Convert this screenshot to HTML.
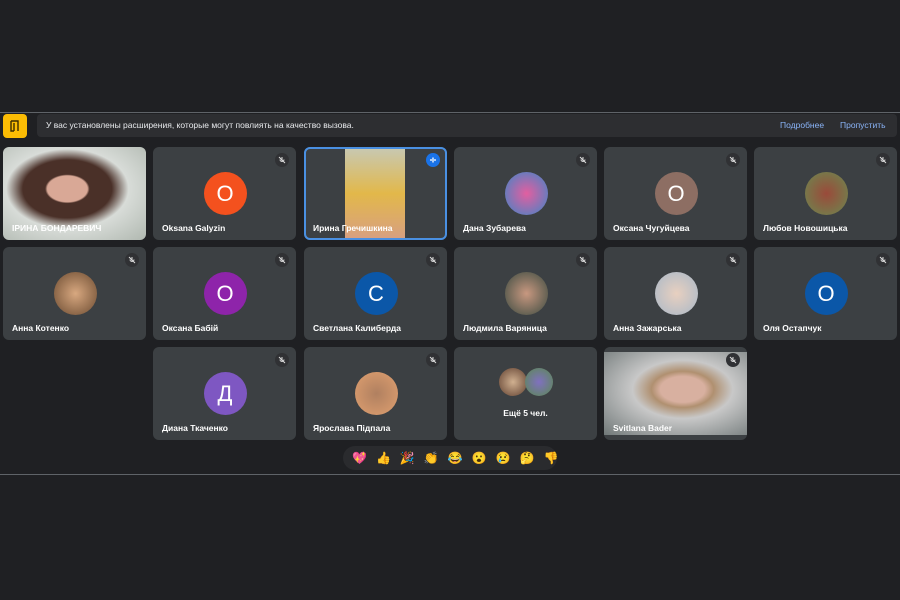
<!DOCTYPE html><html><head><meta charset="utf-8"><style>
body{margin:0;width:900px;height:600px;background:#1f2023;font-family:"Liberation Sans",sans-serif;position:relative;overflow:hidden}
.t{position:absolute;width:143px;height:93px;background:#3c4043;border-radius:6px;overflow:hidden}
.n{position:absolute;left:9px;bottom:7px;color:#fff;font-size:8.5px;font-weight:bold}
.av{position:absolute;left:50%;top:25px;width:43px;height:43px;margin-left:-21px;border-radius:50%;color:#fff;font-size:22px;text-align:center;line-height:43px}
.m{position:absolute;right:7px;top:6px;width:14px;height:14px;border-radius:50%;background:#303134}
.m svg{position:absolute;left:3px;top:3px}
</style></head><body>
<div style="position:absolute;left:0;top:112px;width:900px;height:1px;background:#5f6368"></div>
<div style="position:absolute;left:0;top:474px;width:900px;height:1px;background:#5f6368"></div>
<div style="position:absolute;left:3px;top:114px;width:24px;height:24px;background:#fbbc04;border-radius:4px"><svg width="24" height="24"><path d="M8 7h7v10M8 7v10h3M11 9v8M13 11h0" stroke="#3c2c00" stroke-width="1.4" fill="none"/></svg></div>
<div style="position:absolute;left:37px;top:114px;width:860px;height:23px;background:#2d2e31;border-radius:4px;color:#e8eaed;font-size:8.5px;line-height:23px">
<span style="margin-left:9px">У вас установлены расширения, которые могут повлиять на качество вызова.</span>
<span style="position:absolute;left:743px;color:#8ab4f8">Подробнее</span><span style="position:absolute;left:803px;color:#8ab4f8">Пропустить</span></div>

<div class="t" style="left:3px;top:147px;background:radial-gradient(ellipse at 45% 45%,#d9a896 0 18%,#4a3028 20% 40%,#d8dcd8 55%,#b0b8b0)"><div class="n">ІРИНА БОНДАРЕВИЧ</div></div>
<div class="t" style="left:153px;top:147px"><div class="m"><svg width="8" height="8"><path d="M4 1v4M2 3.5a2 2 0 0 0 4 0M1 1l6 6" stroke="#ddd" stroke-width="1" fill="none"/></svg></div><div class="av" style="background:#f4511e">O</div><div class="n">Oksana Galyzin</div></div>
<div class="t" style="left:304px;top:147px;outline:2px solid #4a90e2;outline-offset:-2px"><div style="position:absolute;left:41px;top:2px;width:60px;height:89px;background:linear-gradient(#c8c8b0,#e2b84a 50%,#d8a080)"></div><div class="m" style="background:#1a73e8"><svg width="8" height="8"><path d="M2 3v2M4 1.5v5M6 3v2" stroke="#fff" stroke-width="1.3"/></svg></div><div class="n">Ирина Гречишкина</div></div>
<div class="t" style="left:454px;top:147px"><div class="m"><svg width="8" height="8"><path d="M4 1v4M2 3.5a2 2 0 0 0 4 0M1 1l6 6" stroke="#ddd" stroke-width="1" fill="none"/></svg></div><div class="av" style="background:radial-gradient(#e25fa0,#3b86c8)"></div><div class="n">Дана Зубарева</div></div>
<div class="t" style="left:604px;top:147px"><div class="m"><svg width="8" height="8"><path d="M4 1v4M2 3.5a2 2 0 0 0 4 0M1 1l6 6" stroke="#ddd" stroke-width="1" fill="none"/></svg></div><div class="av" style="background:#8d6e63">O</div><div class="n">Оксана Чугуйцева</div></div>
<div class="t" style="left:754px;top:147px"><div class="m"><svg width="8" height="8"><path d="M4 1v4M2 3.5a2 2 0 0 0 4 0M1 1l6 6" stroke="#ddd" stroke-width="1" fill="none"/></svg></div><div class="av" style="background:radial-gradient(#9a4a3a,#6a8a50)"></div><div class="n">Любов Новошицька</div></div>

<div class="t" style="left:3px;top:247px"><div class="m"><svg width="8" height="8"><path d="M4 1v4M2 3.5a2 2 0 0 0 4 0M1 1l6 6" stroke="#ddd" stroke-width="1" fill="none"/></svg></div><div class="av" style="background:radial-gradient(#d8a880,#6a4a30)"></div><div class="n">Анна Котенко</div></div>
<div class="t" style="left:153px;top:247px"><div class="m"><svg width="8" height="8"><path d="M4 1v4M2 3.5a2 2 0 0 0 4 0M1 1l6 6" stroke="#ddd" stroke-width="1" fill="none"/></svg></div><div class="av" style="background:#8e24aa">O</div><div class="n">Оксана Бабій</div></div>
<div class="t" style="left:304px;top:247px"><div class="m"><svg width="8" height="8"><path d="M4 1v4M2 3.5a2 2 0 0 0 4 0M1 1l6 6" stroke="#ddd" stroke-width="1" fill="none"/></svg></div><div class="av" style="background:#0b57a8">C</div><div class="n">Светлана Калиберда</div></div>
<div class="t" style="left:454px;top:247px"><div class="m"><svg width="8" height="8"><path d="M4 1v4M2 3.5a2 2 0 0 0 4 0M1 1l6 6" stroke="#ddd" stroke-width="1" fill="none"/></svg></div><div class="av" style="background:radial-gradient(#c89880,#3a4a40)"></div><div class="n">Людмила Варяница</div></div>
<div class="t" style="left:604px;top:247px"><div class="m"><svg width="8" height="8"><path d="M4 1v4M2 3.5a2 2 0 0 0 4 0M1 1l6 6" stroke="#ddd" stroke-width="1" fill="none"/></svg></div><div class="av" style="background:radial-gradient(#e8d0c0,#a8b8c8)"></div><div class="n">Анна Зажарська</div></div>
<div class="t" style="left:754px;top:247px"><div class="m"><svg width="8" height="8"><path d="M4 1v4M2 3.5a2 2 0 0 0 4 0M1 1l6 6" stroke="#ddd" stroke-width="1" fill="none"/></svg></div><div class="av" style="background:#0b57a8">O</div><div class="n">Оля Остапчук</div></div>

<div class="t" style="left:153px;top:347px"><div class="m"><svg width="8" height="8"><path d="M4 1v4M2 3.5a2 2 0 0 0 4 0M1 1l6 6" stroke="#ddd" stroke-width="1" fill="none"/></svg></div><div class="av" style="background:#7e57c2">Д</div><div class="n">Диана Ткаченко</div></div>
<div class="t" style="left:304px;top:347px"><div class="m"><svg width="8" height="8"><path d="M4 1v4M2 3.5a2 2 0 0 0 4 0M1 1l6 6" stroke="#ddd" stroke-width="1" fill="none"/></svg></div><div class="av" style="background:radial-gradient(#b08060,#e0a070)"></div><div class="n">Ярослава Підпала</div></div>
<div class="t" style="left:454px;top:347px"><div style="position:absolute;left:45px;top:21px;width:28px;height:28px;border-radius:50%;background:radial-gradient(#d0b090,#604030)"></div><div style="position:absolute;left:71px;top:21px;width:28px;height:28px;border-radius:50%;background:radial-gradient(#8070c0,#5a8a50)"></div><div style="position:absolute;top:61px;width:100%;text-align:center;color:#fff;font-size:8.5px;font-weight:bold">Ещё 5 чел.</div></div>
<div class="t" style="left:604px;top:347px;background:#3c4043"><div style="position:absolute;left:0;top:5px;width:143px;height:83px;background:radial-gradient(ellipse at 55% 45%,#d8b0a0 0 20%,#b09070 28%,#c8c8c8 45%,#707878)"></div><div class="m"><svg width="8" height="8"><path d="M4 1v4M2 3.5a2 2 0 0 0 4 0M1 1l6 6" stroke="#ddd" stroke-width="1" fill="none"/></svg></div><div class="n">Svitlana Bader</div></div>

<div style="position:absolute;left:343px;top:446px;width:214px;height:24px;background:#2a2b2e;border-radius:12px;font-size:12px;line-height:24px;letter-spacing:9px;text-indent:9px;text-align:center;white-space:nowrap">💖👍🎉👏😂😮😢🤔👎</div>
</body></html>
